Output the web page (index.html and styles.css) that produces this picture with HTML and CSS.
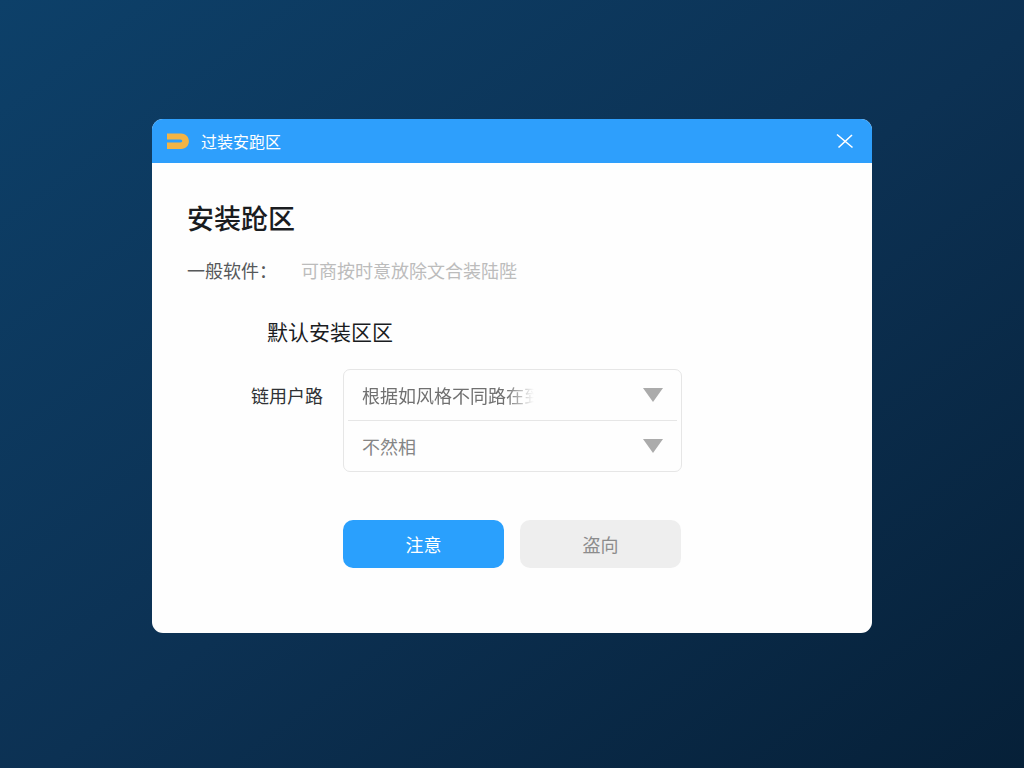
FILE: index.html
```html
<!DOCTYPE html>
<html lang="zh-CN">
<head>
    <meta charset="UTF-8">
    <meta name="viewport" content="width=device-width, initial-scale=1">
    <title>安装跄区</title>
    <link rel="stylesheet" href="styles.css">
</head>
<body>
<main class="dialog">
    <header class="titlebar">
        <svg class="logo" viewBox="0 0 24 18" aria-hidden="true">
            <path d="M1 1.5H15C25.5 1.5 25.5 17 15 17H1V10.5H14.5C16.8 10.5 16.8 7.5 14.5 7.5H1Z" fill="#f3b445"/>
        </svg>
        <span class="name">过装安跑区</span>
        <button class="close" type="button" aria-label="关闭">
            <svg viewBox="0 0 18 16" aria-hidden="true">
                <path d="M1 1.5L16.5 14.5M16 2L2.5 14.5" fill="none" stroke="#fff" stroke-width="1.6"/>
            </svg>
        </button>
    </header>

    <form class="content">
        <h1>安装跄区</h1>
        <div class="software">
            <label for="software">一般软件：</label>
            <input id="software" type="text" placeholder="可商按时意放除文合装陆陛">
        </div>

        <h2>默认安装区区</h2>
        <div class="user">
            <label for="style">链用户路</label>
            <div class="selects">
                <div class="select">
                    <select id="style" class="fade">
                        <option>根据如风格不同路在到</option>
                    </select>
                    <svg class="arrow" viewBox="0 0 20 14" aria-hidden="true"><path d="M0 0H20L10 14Z"/></svg>
                </div>
                <div class="select">
                    <select aria-label="不然相">
                        <option>不然相</option>
                    </select>
                    <svg class="arrow" viewBox="0 0 20 14" aria-hidden="true"><path d="M0 0H20L10 14Z"/></svg>
                </div>
            </div>
        </div>

        <div class="buttons">
            <button class="btn primary" type="button">注意</button>
            <button class="btn" type="button">盗向</button>
        </div>
    </form>
</main>
</body>
</html>
```
FILE: styles.css
```css
* {
    box-sizing: border-box;
    margin: 0;
    padding: 0;
}

body {
    display: flex;
    align-items: center;
    justify-content: center;
    min-height: 100vh;
    padding: 16px 16px 32px;
    background: linear-gradient(to bottom right, #0d4069 0%, #0c3153 52%, #062038 100%);
    color: #1a1c1f;
    font: 18px/28px "Noto Sans CJK SC", sans-serif;
}

button, input, select {
    border: 0;
    background: none;
    color: inherit;
    font: inherit;
}

button {
    cursor: pointer;
}

.dialog {
    width: 100%;
    max-width: 720px;
    overflow: hidden;
    border-radius: 11px;
    background: #fefefe;
}

/* title bar */
.titlebar {
    display: flex;
    align-items: center;
    height: 44px;
    padding: 0 16px 0 14px;
    background: #2e9ffc;
    color: #fff;
    font-size: 16px;
}

.logo {
    width: 24px;
    height: 18px;
    margin-right: 11px;
}

.close {
    display: flex;
    margin-left: auto;
    padding: 2px;
}

.close svg {
    width: 18px;
    height: 16px;
}

/* form */
.content {
    padding: 35px 35px 65px;
}

h1 {
    font-size: 27px;
    font-weight: 500;
    line-height: 40px;
}

.software {
    display: flex;
    gap: 24px;
    margin-top: 18px;
    color: #56585a;
}

.software input {
    flex: 1;
    min-width: 0;
    outline: 0;
}

.software input::placeholder {
    color: #bcbcbc;
    opacity: 1;
}

h2 {
    margin: 31px 0 0 80px;
    font-size: 21px;
    font-weight: 400;
    line-height: 32px;
}

.user {
    display: flex;
    gap: 20px;
    margin: 22px 155px 0 64px;
}

.user > label {
    flex: none;
    color: #303235;
    line-height: 52px;
}

.selects {
    flex: 1;
    min-width: 0;
    padding: 0 4px;
    border: 1px solid #e6e6e6;
    border-radius: 7px;
}

.select {
    display: grid;
    align-items: center;
}

.select + .select {
    border-top: 1px solid #e6e6e6;
}

.select select,
.arrow {
    grid-area: 1 / 1;
}

.select select {
    width: 100%;
    height: 50px;
    padding: 0 46px 0 14px;
    appearance: none;
    color: #858585;
}

.select .fade {
    color: #707070;
    -webkit-mask-image: linear-gradient(90deg, #000 158px, transparent 186px);
    mask-image: linear-gradient(90deg, #000 158px, transparent 186px);
}

.arrow {
    justify-self: end;
    width: 20px;
    height: 14px;
    margin-right: 14px;
    fill: #ababab;
    pointer-events: none;
}

.buttons {
    display: flex;
    gap: 16px;
    margin: 48px 156px 0;
}

.btn {
    flex: 1;
    height: 48px;
    border-radius: 10px;
    background: #eee;
    color: #8c8c8c;
}

.primary {
    background: #2aa0fd;
    color: #fff;
}

@media (max-width: 640px) {
    .content {
        padding: 24px 20px;
    }

    h2, .user, .buttons {
        margin-left: 0;
        margin-right: 0;
    }

    .user {
        flex-direction: column;
        gap: 0;
    }
}
```
